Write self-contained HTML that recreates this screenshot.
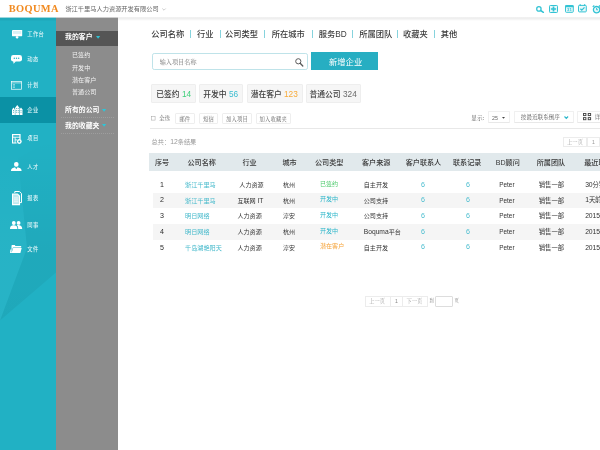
<!DOCTYPE html>
<html lang="zh-CN"><head><meta charset="utf-8"><title>BOQUMA</title>
<style>
html,body{margin:0;padding:0}
body{width:600px;height:450px;overflow:hidden;background:#fff;position:relative;font-family:"Liberation Sans","Noto Sans CJK SC",sans-serif;}
.t{position:absolute;white-space:nowrap;line-height:12px;height:12px}
.c{text-align:center}
.b{position:absolute;box-sizing:border-box}
svg{position:absolute;overflow:visible}
</style></head><body>
<div id="app" style="position:absolute;left:0;top:0;width:600px;height:450px;overflow:hidden;will-change:transform">

<div class="b" style="left:0;top:0;width:600px;height:17.5px;background:#fff"></div>
<div class="b" style="left:0;top:17px;width:600px;height:4px;background:linear-gradient(to bottom,rgba(0,0,0,0.045),rgba(0,0,0,0.07) 25%,rgba(0,0,0,0.05) 50%,rgba(0,0,0,0))"></div>
<div class="b" style="left:0;top:17px;width:56px;height:1px;background:#21b1c4;opacity:0.4"></div>
<div class="b" style="left:56px;top:17px;width:61.7px;height:1px;background:#8c8c8c;opacity:0.35"></div>
<div class="t" style="left:8.8px;top:3.10px;font-size:10.4px;color:#f18a20;font-family:'Liberation Serif',serif;font-weight:bold;letter-spacing:0.35px">BOQUMA</div>
<div class="t" style="left:65.4px;top:3.20px;font-size:6.22px;color:#666;">浙江千里马人力资源开发有限公司</div>
<svg style="left:161.5px;top:7.5px" width="4" height="3" viewBox="0 0 4 3"><path d="M0.3 0.5 L2 2.2 L3.7 0.5" fill="none" stroke="#999" stroke-width="0.5"/></svg>
<svg style="left:535.8px;top:6.2px" width="8.4" height="7" viewBox="0 0 8.4 7"><circle cx="2.9" cy="2.9" r="2.2" fill="none" stroke="#33c3d4" stroke-width="1.25"/><path d="M4.6 4.5 L7.4 6.3" stroke="#33c3d4" stroke-width="1.5" stroke-linecap="round"/></svg>
<svg style="left:549.3px;top:4.9px" width="9" height="8" viewBox="0 0 9 8"><rect x="0.5" y="0.5" width="8" height="7" rx="0.8" fill="#e9f8fa" stroke="#33c3d4" stroke-width="1"/><path d="M4.5 1.6 V6.4 M1.9 4 H7.1" stroke="#33c3d4" stroke-width="1.7"/></svg>
<svg style="left:565px;top:4.9px" width="8.8" height="7.8" viewBox="0 0 8.8 7.8"><rect x="0.5" y="0.5" width="7.8" height="6.8" rx="0.8" fill="#e9f8fa" stroke="#33c3d4" stroke-width="1"/><rect x="0.2" y="0.2" width="8.4" height="2" rx="0.6" fill="#33c3d4"/><text x="4.4" y="6.5" font-size="4.3" font-weight="bold" fill="#33c3d4" text-anchor="middle" font-family="Liberation Sans,sans-serif">31</text></svg>
<svg style="left:578px;top:4.4px" width="8.8" height="8.4" viewBox="0 0 8.8 8.4"><rect x="0.5" y="1.4" width="7.8" height="6.5" rx="0.8" fill="#e9f8fa" stroke="#33c3d4" stroke-width="1"/><path d="M2.2 0.2 V2 M6.6 0.2 V2" stroke="#33c3d4" stroke-width="1.2"/><path d="M2.4 4.7 L3.8 6.1 L6.5 3.4" fill="none" stroke="#33c3d4" stroke-width="1.3"/></svg>
<svg style="left:592.4px;top:4.6px" width="9" height="8.4" viewBox="0 0 9 8.4"><circle cx="4.6" cy="4.7" r="3.2" fill="#e9f8fa" stroke="#33c3d4" stroke-width="1.3"/><path d="M4.6 2.9 V4.8 H6" fill="none" stroke="#33c3d4" stroke-width="1"/><path d="M0.7 1.9 L2.3 0.5 M8.6 1.9 L7 0.5" stroke="#33c3d4" stroke-width="1.2"/></svg>
<div class="b" style="left:0;top:17.5px;width:56px;height:432.5px;background:#21b1c4;overflow:hidden">
<svg style="left:0;top:0" width="56" height="433" viewBox="0 0 56 433"><defs><linearGradient id="gd" x1="0" y1="0" x2="0" y2="1"><stop offset="0" stop-color="#000" stop-opacity="0"/><stop offset="0.6" stop-color="#000" stop-opacity="0.045"/><stop offset="1" stop-color="#000" stop-opacity="0.05"/></linearGradient><linearGradient id="gl" x1="0" y1="0" x2="0" y2="1"><stop offset="0" stop-color="#fff" stop-opacity="0"/><stop offset="0.5" stop-color="#fff" stop-opacity="0.025"/><stop offset="1" stop-color="#fff" stop-opacity="0.03"/></linearGradient></defs><polygon points="18,140 56,120 56,254.5 0,302.5 27,230" fill="url(#gd)"/><polygon points="0,130 18,140 27,230 0,302.5" fill="url(#gl)"/><rect x="0" y="0" width="56" height="2.5" fill="#000" opacity="0.05"/></svg>
<div class="b" style="left:0;top:79.3px;width:56px;height:26.6px;background:#0b91a5"></div>
</div>
<div class="t" style="left:27.3px;top:27.80px;font-size:5.3px;color:#dcf3f6;font-weight:500;letter-spacing:0.3px">工作台</div>
<div class="t" style="left:27.3px;top:53.20px;font-size:5.3px;color:#dcf3f6;font-weight:500;letter-spacing:0.3px">动态</div>
<div class="t" style="left:27.3px;top:79.00px;font-size:5.3px;color:#dcf3f6;font-weight:500;letter-spacing:0.3px">计划</div>
<div class="t" style="left:27.3px;top:104.30px;font-size:5.3px;color:#dcf3f6;font-weight:500;letter-spacing:0.3px">企业</div>
<div class="t" style="left:27.3px;top:132.00px;font-size:5.3px;color:#dcf3f6;font-weight:500;letter-spacing:0.3px">项目</div>
<div class="t" style="left:27.3px;top:160.50px;font-size:5.3px;color:#dcf3f6;font-weight:500;letter-spacing:0.3px">人才</div>
<div class="t" style="left:27.3px;top:192.00px;font-size:5.3px;color:#dcf3f6;font-weight:500;letter-spacing:0.3px">报表</div>
<div class="t" style="left:27.3px;top:218.70px;font-size:5.3px;color:#dcf3f6;font-weight:500;letter-spacing:0.3px">同事</div>
<div class="t" style="left:27.3px;top:243.00px;font-size:5.3px;color:#dcf3f6;font-weight:500;letter-spacing:0.3px">文件</div>
<svg style="left:11.8px;top:29.9px" width="10.2" height="8.8" viewBox="0 0 11 9" preserveAspectRatio="none"><rect x="0" y="0" width="11" height="6.4" rx="0.5" fill="#fff"/><path d="M4.3 6.4 H6.7 L7 8 L5.5 8.9 L4 8 Z" fill="#fff"/><rect x="1" y="1" width="9" height="3" fill="#d9f1f5"/></svg>
<svg style="left:11px;top:55px" width="11" height="9" viewBox="0 0 11 9"><rect x="0" y="0" width="11" height="6.6" rx="2.4" fill="#fff"/><path d="M2.2 6 L2.6 8.8 L5 6.2 Z" fill="#fff"/><circle cx="3.3" cy="3.3" r="0.7" fill="#21b1c4"/><circle cx="5.5" cy="3.3" r="0.7" fill="#21b1c4"/><circle cx="7.7" cy="3.3" r="0.7" fill="#21b1c4"/></svg>
<svg style="left:11px;top:80.6px" width="11" height="8.6" viewBox="0 0 11 8.6"><rect x="0.35" y="0.35" width="10.3" height="7.9" fill="none" stroke="#fff" stroke-width="0.7"/><path d="M0.3 1.9 H10.7" stroke="#fff" stroke-width="0.6"/><path d="M1.8 3.6 H4 M1.8 5 H4 M1.8 6.4 H4" stroke="#fff" stroke-width="0.5"/></svg>
<svg style="left:12px;top:105.3px" width="10.5" height="10" viewBox="0 0 10.5 10"><path d="M3 10 V3 L5.25 0 L7.5 3 V10 Z" fill="#fff"/><path d="M0 10 V4.4 L1.5 2.4 L3 4.4 V10 Z" fill="#fff"/><path d="M7.5 10 V4.4 L9 2.4 L10.5 4.4 V10 Z" fill="#fff"/><g fill="#0b91a5"><rect x="3.9" y="3.2" width="0.8" height="0.8"/><rect x="5.8" y="3.2" width="0.8" height="0.8"/><rect x="3.9" y="5" width="0.8" height="0.8"/><rect x="5.8" y="5" width="0.8" height="0.8"/><rect x="3.9" y="6.8" width="0.8" height="0.8"/><rect x="5.8" y="6.8" width="0.8" height="0.8"/><rect x="1.1" y="5" width="0.8" height="0.8"/><rect x="1.1" y="6.8" width="0.8" height="0.8"/><rect x="8.6" y="5" width="0.8" height="0.8"/><rect x="8.6" y="6.8" width="0.8" height="0.8"/><rect x="2.9" y="4.4" width="0.35" height="5.6"/><rect x="7.3" y="4.4" width="0.35" height="5.6"/></g></svg>
<svg style="left:12.2px;top:133.6px" width="9.8" height="9.9" viewBox="0 0 9.8 9.9"><path d="M8 5.2 V0.6 H0.6 V9 H4.6" fill="none" stroke="#fff" stroke-width="1.2"/><path d="M0.6 3.2 H8 M3.1 3.2 V9 M3.1 5.9 H5" stroke="#fff" stroke-width="0.9"/><circle cx="7.3" cy="7.5" r="2.4" fill="#fff"/><circle cx="7.3" cy="7.5" r="1" fill="#21b1c4"/></svg>
<svg style="left:11.4px;top:162px" width="10.6" height="9" viewBox="0 0 10.6 10.4" preserveAspectRatio="none"><rect x="3.1" y="0" width="4.4" height="5.6" rx="2" fill="#fff"/><path d="M0 10.4 C0 7.4 2.2 7 4 6.2 L5.3 8.4 L6.6 6.2 C8.4 7 10.6 7.4 10.6 10.4 Z" fill="#fff"/></svg>
<svg style="left:11.7px;top:190.8px" width="10" height="14.2" viewBox="0 0 10 14.2"><path d="M2.8 2 V0.5 H7.4 L9.5 2.6 V11.6 H8" fill="none" stroke="#fff" stroke-width="1"/><path d="M0.55 2.95 H5.4 L7.5 5 V13.65 H0.55 Z" fill="#bfe8ee" stroke="#fff" stroke-width="1.1"/><path d="M2 7 H6 M2 8.9 H6 M2 10.8 H6" stroke="#fff" stroke-width="0.7"/></svg>
<svg style="left:10.3px;top:220.8px" width="12.2" height="8" viewBox="0 0 12.2 8"><circle cx="3.8" cy="2" r="1.9" fill="#fff"/><path d="M0 8 C0 5 1.6 4.3 3.8 4.3 C6 4.3 7.4 5 7.4 8 Z" fill="#fff"/><circle cx="8.6" cy="1.9" r="1.9" fill="#fff"/><path d="M6.9 4.2 C8 3.9 12.2 3.8 12.2 8 H8.2 C8.2 6 7.9 5 6.9 4.2 Z" fill="#fff"/></svg>
<svg style="left:10.3px;top:245.3px" width="11.7" height="8" viewBox="0 0 11.7 8"><path d="M1.5 1.2 L1.8 0 H4.8 L5.4 1 H11.2 V2.6 H2.9 L1.5 7 Z" fill="#fff"/><path d="M3.2 3.1 H11.7 L10.4 8 H0 L0.4 4.6 L1.3 4.6 L1.6 7.8 Z" fill="#fff"/></svg>
<div class="b" style="left:56px;top:17.7px;width:61.7px;height:432.3px;background:#8c8c8c"></div>
<div class="b" style="left:56px;top:30.8px;width:61.7px;height:14.9px;background:#555"></div>
<div class="t" style="left:65.1px;top:31.20px;font-size:6.85px;color:#fff;font-weight:bold">我的客户</div>
<svg style="left:96.1px;top:36px" width="4.2" height="2.8" viewBox="0 0 3.6 2.2"><path d="M0 0 H3.6 L1.8 2.2 Z" fill="#2fc1d2"/></svg>
<div class="t" style="left:72px;top:49.00px;font-size:6.1px;color:#f2f2f2;">已签约</div>
<div class="t" style="left:72px;top:61.60px;font-size:6.1px;color:#f2f2f2;">开发中</div>
<div class="t" style="left:72px;top:74.00px;font-size:6.1px;color:#f2f2f2;">潜在客户</div>
<div class="t" style="left:72px;top:86.20px;font-size:6.1px;color:#f2f2f2;">普通公司</div>
<div class="t" style="left:65.1px;top:104.10px;font-size:6.85px;color:#fff;font-weight:bold">所有的公司</div>
<svg style="left:101.7px;top:108.6px" width="4.2" height="2.8" viewBox="0 0 3.2 2"><path d="M0 0 H3.2 L1.6 2 Z" fill="#2cc6d9"/></svg>
<div class="b" style="left:61px;top:117px;width:53px;height:0;border-top:0.7px dotted rgba(255,255,255,0.16)"></div>
<div class="t" style="left:65.1px;top:119.90px;font-size:6.85px;color:#fff;font-weight:bold">我的收藏夹</div>
<svg style="left:101.7px;top:124.3px" width="4.2" height="2.8" viewBox="0 0 3.2 2"><path d="M0 0 H3.2 L1.6 2 Z" fill="#2cc6d9"/></svg>
<div class="b" style="left:61px;top:133px;width:53px;height:0;border-top:0.7px dotted rgba(255,255,255,0.16)"></div>
<div class="t" style="left:151.25px;top:29.30px;font-size:8.25px;color:#3c3c3c;font-weight:500">公司名称</div>
<div class="t" style="left:197px;top:29.30px;font-size:8.25px;color:#3c3c3c;font-weight:500">行业</div>
<div class="t" style="left:225px;top:29.30px;font-size:8.25px;color:#3c3c3c;font-weight:500">公司类型</div>
<div class="t" style="left:271.75px;top:29.30px;font-size:8.25px;color:#3c3c3c;font-weight:500">所在城市</div>
<div class="t" style="left:318.75px;top:29.30px;font-size:8.25px;color:#3c3c3c;font-weight:500">服务BD</div>
<div class="t" style="left:359.25px;top:29.30px;font-size:8.25px;color:#3c3c3c;font-weight:500">所属团队</div>
<div class="t" style="left:403px;top:29.30px;font-size:8.25px;color:#3c3c3c;font-weight:500">收藏夹</div>
<div class="t" style="left:440.75px;top:29.30px;font-size:8.25px;color:#3c3c3c;font-weight:500">其他</div>
<div class="b" style="left:190.4px;top:30.2px;width:1px;height:7.4px;background:#86d3dd"></div>
<div class="b" style="left:219.65px;top:30.2px;width:1px;height:7.4px;background:#86d3dd"></div>
<div class="b" style="left:264.04999999999995px;top:30.2px;width:1px;height:7.4px;background:#86d3dd"></div>
<div class="b" style="left:312.15px;top:30.2px;width:1px;height:7.4px;background:#86d3dd"></div>
<div class="b" style="left:352.15px;top:30.2px;width:1px;height:7.4px;background:#86d3dd"></div>
<div class="b" style="left:396.75px;top:30.2px;width:1px;height:7.4px;background:#86d3dd"></div>
<div class="b" style="left:434.15px;top:30.2px;width:1px;height:7.4px;background:#86d3dd"></div>
<div class="b" style="left:152px;top:53px;width:155.5px;height:16.8px;border:0.9px solid #bfe3e9;border-radius:2.2px;background:#fff"></div>
<div class="t" style="left:159.7px;top:55.50px;font-size:6.15px;color:#777;font-family:'Liberation Serif','Noto Serif CJK SC',serif">输入项目名称</div>
<svg style="left:295.4px;top:57.5px" width="8.4" height="8.6" viewBox="0 0 8.4 8.6"><circle cx="3.3" cy="3.3" r="2.6" fill="none" stroke="#5a5a5a" stroke-width="1"/><path d="M5.2 5.3 L7.8 8" stroke="#5a5a5a" stroke-width="1.3" stroke-linecap="round"/></svg>
<div class="b" style="left:311.4px;top:52.1px;width:67px;height:17.6px;background:#27aec2"></div>
<div class="t c" style="left:295.6px;width:100px;top:56.10px;font-size:8.3px;color:#fff;">新增企业</div>
<div class="b" style="left:151px;top:84px;width:44.5px;height:18.5px;background:#f6f6f6;border:0.6px solid #eeeeee;border-radius:1px"></div>
<div class="t" style="left:156.35px;top:88.50px;font-size:7.75px;color:#3c3c3c;font-weight:500">已签约 <span style="color:#3fcf7a;font-size:9.2px;font-weight:400;display:inline-block;transform:scaleX(0.9);transform-origin:0 50%;line-height:12px;vertical-align:top;position:relative;top:-0.2px">14</span></div>
<div class="b" style="left:199px;top:84px;width:44px;height:18.5px;background:#f6f6f6;border:0.6px solid #eeeeee;border-radius:1px"></div>
<div class="t" style="left:203.35px;top:88.50px;font-size:7.75px;color:#3c3c3c;font-weight:500">开发中 <span style="color:#3bbdd0;font-size:9.2px;font-weight:400;display:inline-block;transform:scaleX(0.9);transform-origin:0 50%;line-height:12px;vertical-align:top;position:relative;top:-0.2px">56</span></div>
<div class="b" style="left:247px;top:84px;width:55.5px;height:18.5px;background:#f6f6f6;border:0.6px solid #eeeeee;border-radius:1px"></div>
<div class="t" style="left:250.85px;top:88.50px;font-size:7.75px;color:#3c3c3c;font-weight:500">潜在客户 <span style="color:#f7ab3a;font-size:9.2px;font-weight:400;display:inline-block;transform:scaleX(0.9);transform-origin:0 50%;line-height:12px;vertical-align:top;position:relative;top:-0.2px">123</span></div>
<div class="b" style="left:305.75px;top:84px;width:55.5px;height:18.5px;background:#f6f6f6;border:0.6px solid #eeeeee;border-radius:1px"></div>
<div class="t" style="left:309.6px;top:88.50px;font-size:7.75px;color:#3c3c3c;font-weight:500">普通公司 <span style="color:#6a6a6a;font-size:9.2px;font-weight:400;display:inline-block;transform:scaleX(0.9);transform-origin:0 50%;line-height:12px;vertical-align:top;position:relative;top:-0.2px">324</span></div>
<svg style="left:151.3px;top:116.3px" width="4.4" height="4.4" viewBox="0 0 4.4 4.4"><rect x="0.3" y="0.3" width="3.8" height="3.8" fill="#fff" stroke="#a0a0a0" stroke-width="0.5"/></svg>
<div class="t" style="left:159px;top:112.40px;font-size:5.6px;color:#666;font-family:'Liberation Serif','Noto Serif CJK SC',serif">全选</div>
<div class="b" style="left:175px;top:113px;width:19.5px;height:11px;border:0.6px solid #eeeeee;border-radius:1px;background:#fff"></div>
<div class="t c" style="left:134.85px;width:100px;top:112.50px;font-size:5.3px;color:#666;font-family:'Liberation Serif','Noto Serif CJK SC',serif;letter-spacing:0.15px">邮件</div>
<div class="b" style="left:199px;top:113px;width:19px;height:11px;border:0.6px solid #eeeeee;border-radius:1px;background:#fff"></div>
<div class="t c" style="left:158.6px;width:100px;top:112.50px;font-size:5.3px;color:#666;font-family:'Liberation Serif','Noto Serif CJK SC',serif;letter-spacing:0.15px">短信</div>
<div class="b" style="left:222px;top:113px;width:29.75px;height:11px;border:0.6px solid #eeeeee;border-radius:1px;background:#fff"></div>
<div class="t c" style="left:186.975px;width:100px;top:112.50px;font-size:5.3px;color:#666;font-family:'Liberation Serif','Noto Serif CJK SC',serif;letter-spacing:0.15px">加入项目</div>
<div class="b" style="left:255.75px;top:113px;width:34.75px;height:11px;border:0.6px solid #eeeeee;border-radius:1px;background:#fff"></div>
<div class="t c" style="left:223.22500000000002px;width:100px;top:112.50px;font-size:5.3px;color:#666;font-family:'Liberation Serif','Noto Serif CJK SC',serif;letter-spacing:0.15px">加入收藏夹</div>
<div class="t" style="left:471.2px;top:111.50px;font-size:5.6px;color:#666;font-family:'Liberation Serif','Noto Serif CJK SC',serif;letter-spacing:0.2px">显示:</div>
<div class="b" style="left:487.5px;top:111px;width:22.5px;height:12.2px;border:0.6px solid #f0f0f0;border-bottom-color:#e8e8e8;border-radius:1px;background:#fff"></div>
<div class="t" style="left:492px;top:111.80px;font-size:5.3px;color:#666;">25</div>
<svg style="left:501.6px;top:116.8px" width="3" height="1.8" viewBox="0 0 3 1.8"><path d="M0 0 H3 L1.5 1.8 Z" fill="#444"/></svg>
<div class="b" style="left:514.25px;top:111px;width:59.4px;height:12.2px;border:0.6px solid #f0f0f0;border-bottom-color:#e8e8e8;border-radius:1px;background:#fff"></div>
<div class="t" style="left:520.8px;top:111.40px;font-size:5.6px;color:#5a5a5a;font-family:'Liberation Serif','Noto Serif CJK SC',serif">按最近联系倒序</div>
<svg style="left:563.8px;top:116px" width="4.6" height="3" viewBox="0 0 4.6 3"><path d="M0.5 0.5 L2.3 2.4 L4.1 0.5" fill="none" stroke="#2fb8cc" stroke-width="1.15"/></svg>
<div class="b" style="left:577.2px;top:111px;width:30px;height:12.2px;border:0.6px solid #f0f0f0;border-bottom-color:#e8e8e8;border-radius:1px;background:#fff"></div>
<svg style="left:583.2px;top:112.9px" width="8.1" height="7.2" viewBox="0 0 8.1 7.2"><g fill="none" stroke="#484848" stroke-width="0.95"><rect x="0.48" y="0.48" width="2.4" height="2.1"/><rect x="5.22" y="0.48" width="2.4" height="2.1"/><rect x="0.48" y="4.62" width="2.4" height="2.1"/><rect x="5.22" y="4.62" width="2.4" height="2.1"/></g></svg>
<div class="t" style="left:594.8px;top:111.40px;font-size:5.6px;color:#5a5a5a;font-family:'Liberation Serif','Noto Serif CJK SC',serif">详细</div>
<div class="b" style="left:150px;top:128.3px;width:450px;height:0.6px;background:#e8e8e8"></div>
<div class="t" style="left:151.6px;top:136.20px;font-size:6.2px;color:#999;">总共：<span style="font-size:6.8px">12</span>条结果</div>
<div class="b" style="left:563px;top:136.75px;width:24.2px;height:10.4px;border:0.6px solid #ececec;background:#fff"></div>
<div class="t c" style="left:525px;width:100px;top:136.00px;font-size:5.3px;color:#a5a5a5;font-family:'Liberation Serif','Noto Serif CJK SC',serif">上一页</div>
<div class="b" style="left:586.6px;top:136.75px;width:13px;height:10.4px;border:0.6px solid #ececec;background:#fff"></div>
<div class="t c" style="left:543.4px;width:100px;top:136.20px;font-size:5.2px;color:#999;">1</div>
<div class="b" style="left:149.25px;top:153.25px;width:451px;height:17.5px;background:#e1e9ec"></div>
<div class="t" style="left:155px;top:156.90px;font-size:7.1px;color:#383838;font-weight:500">序号</div>
<div class="t" style="left:187.5px;top:156.90px;font-size:7.1px;color:#383838;font-weight:500">公司名称</div>
<div class="t" style="left:242.5px;top:156.90px;font-size:7.1px;color:#383838;font-weight:500">行业</div>
<div class="t" style="left:282.5px;top:156.90px;font-size:7.1px;color:#383838;font-weight:500">城市</div>
<div class="t" style="left:315px;top:156.90px;font-size:7.1px;color:#383838;font-weight:500">公司类型</div>
<div class="t" style="left:362px;top:156.90px;font-size:7.1px;color:#383838;font-weight:500">客户来源</div>
<div class="t" style="left:405.75px;top:156.90px;font-size:7.1px;color:#383838;font-weight:500">客户联系人</div>
<div class="t" style="left:453px;top:156.90px;font-size:7.1px;color:#383838;font-weight:500">联系记录</div>
<div class="t" style="left:495.75px;top:156.90px;font-size:7.1px;color:#383838;font-weight:500">BD顾问</div>
<div class="t" style="left:536.75px;top:156.90px;font-size:7.1px;color:#383838;font-weight:500">所属团队</div>
<div class="t" style="left:584.25px;top:156.90px;font-size:7.1px;color:#383838;font-weight:500">最近联系</div>
<div class="t c" style="left:112px;width:100px;top:178.70px;font-size:7.1px;color:#2a2a2a;">1</div>
<div class="t" style="left:185px;top:178.90px;font-size:6.15px;color:#45b9cb;">浙江千里马</div>
<div class="t" style="left:239.3px;top:178.90px;font-size:6.1px;color:#333;">人力资源</div>
<div class="t" style="left:283px;top:178.90px;font-size:6.0px;color:#333;">杭州</div>
<div class="t" style="left:320px;top:177.60px;font-size:6.05px;color:#4cc96b;">已签约</div>
<div class="t" style="left:363.75px;top:178.90px;font-size:6.1px;color:#333;">自主开发</div>
<div class="t c" style="left:372.7px;width:100px;top:178.50px;font-size:7.9px;color:#4bbdcf;transform:scaleX(0.9)">6</div>
<div class="t c" style="left:418.3px;width:100px;top:178.50px;font-size:7.9px;color:#4bbdcf;transform:scaleX(0.9)">6</div>
<div class="t" style="left:499.25px;top:178.90px;font-size:6.4px;color:#333;">Peter</div>
<div class="t" style="left:538.75px;top:178.90px;font-size:6.35px;color:#333;">销售一部</div>
<div class="t" style="left:585.2px;top:178.70px;font-size:6.8px;color:#333;letter-spacing:-0.1px">30<span style="font-size:6.3px">分钟前</span></div>
<div class="b" style="left:153px;top:192.50px;width:447px;height:15.7px;background:#f5f5f5"></div>
<div class="t c" style="left:112px;width:100px;top:194.40px;font-size:7.1px;color:#2a2a2a;">2</div>
<div class="t" style="left:185px;top:194.60px;font-size:6.15px;color:#45b9cb;">浙江千里马</div>
<div class="t" style="left:237.4px;top:194.60px;font-size:6.1px;color:#333;">互联网 <span style="font-size:6.7px">IT</span></div>
<div class="t" style="left:283px;top:194.60px;font-size:6.0px;color:#333;">杭州</div>
<div class="t" style="left:320px;top:193.30px;font-size:6.05px;color:#29b5c9;">开发中</div>
<div class="t" style="left:363.75px;top:194.60px;font-size:6.1px;color:#333;">公司支持</div>
<div class="t c" style="left:372.7px;width:100px;top:194.20px;font-size:7.9px;color:#4bbdcf;transform:scaleX(0.9)">6</div>
<div class="t c" style="left:418.3px;width:100px;top:194.20px;font-size:7.9px;color:#4bbdcf;transform:scaleX(0.9)">6</div>
<div class="t" style="left:499.25px;top:194.60px;font-size:6.4px;color:#333;">Peter</div>
<div class="t" style="left:538.75px;top:194.60px;font-size:6.35px;color:#333;">销售一部</div>
<div class="t" style="left:585.2px;top:194.40px;font-size:6.8px;color:#333;letter-spacing:-0.1px">1<span style="font-size:6.3px">天前</span></div>
<div class="t c" style="left:112px;width:100px;top:210.10px;font-size:7.1px;color:#2a2a2a;">3</div>
<div class="t" style="left:185px;top:210.30px;font-size:6.15px;color:#45b9cb;">明日网络</div>
<div class="t" style="left:237.4px;top:210.30px;font-size:6.1px;color:#333;">人力资源</div>
<div class="t" style="left:283px;top:210.30px;font-size:6.0px;color:#333;">淳安</div>
<div class="t" style="left:320px;top:209.00px;font-size:6.05px;color:#29b5c9;">开发中</div>
<div class="t" style="left:363.75px;top:210.30px;font-size:6.1px;color:#333;">公司支持</div>
<div class="t c" style="left:372.7px;width:100px;top:209.90px;font-size:7.9px;color:#4bbdcf;transform:scaleX(0.9)">6</div>
<div class="t c" style="left:418.3px;width:100px;top:209.90px;font-size:7.9px;color:#4bbdcf;transform:scaleX(0.9)">6</div>
<div class="t" style="left:499.25px;top:210.30px;font-size:6.4px;color:#333;">Peter</div>
<div class="t" style="left:538.75px;top:210.30px;font-size:6.35px;color:#333;">销售一部</div>
<div class="t" style="left:585.2px;top:210.10px;font-size:6.8px;color:#333;letter-spacing:-0.1px">2015-</div>
<div class="b" style="left:153px;top:223.90px;width:447px;height:15.7px;background:#f5f5f5"></div>
<div class="t c" style="left:112px;width:100px;top:225.80px;font-size:7.1px;color:#2a2a2a;">4</div>
<div class="t" style="left:185px;top:226.00px;font-size:6.15px;color:#45b9cb;">明日网络</div>
<div class="t" style="left:237.4px;top:226.00px;font-size:6.1px;color:#333;">人力资源</div>
<div class="t" style="left:283px;top:226.00px;font-size:6.0px;color:#333;">杭州</div>
<div class="t" style="left:320px;top:224.70px;font-size:6.05px;color:#29b5c9;">开发中</div>
<div class="t" style="left:363.75px;top:226.00px;font-size:6.1px;color:#333;"><span style="font-size:6.7px">Boquma</span>平台</div>
<div class="t c" style="left:372.7px;width:100px;top:225.60px;font-size:7.9px;color:#4bbdcf;transform:scaleX(0.9)">6</div>
<div class="t c" style="left:418.3px;width:100px;top:225.60px;font-size:7.9px;color:#4bbdcf;transform:scaleX(0.9)">6</div>
<div class="t" style="left:499.25px;top:226.00px;font-size:6.4px;color:#333;">Peter</div>
<div class="t" style="left:538.75px;top:226.00px;font-size:6.35px;color:#333;">销售一部</div>
<div class="t" style="left:585.2px;top:225.80px;font-size:6.8px;color:#333;letter-spacing:-0.1px">2015-</div>
<div class="t c" style="left:112px;width:100px;top:241.50px;font-size:7.1px;color:#2a2a2a;">5</div>
<div class="t" style="left:185px;top:241.70px;font-size:6.15px;color:#45b9cb;">千岛湖艳阳天</div>
<div class="t" style="left:237.4px;top:241.70px;font-size:6.1px;color:#333;">人力资源</div>
<div class="t" style="left:283px;top:241.70px;font-size:6.0px;color:#333;">淳安</div>
<div class="t" style="left:320px;top:240.40px;font-size:6.05px;color:#f5a033;">潜在客户</div>
<div class="t" style="left:363.75px;top:241.70px;font-size:6.1px;color:#333;">自主开发</div>
<div class="t c" style="left:372.7px;width:100px;top:241.30px;font-size:7.9px;color:#4bbdcf;transform:scaleX(0.9)">6</div>
<div class="t c" style="left:418.3px;width:100px;top:241.30px;font-size:7.9px;color:#4bbdcf;transform:scaleX(0.9)">6</div>
<div class="t" style="left:499.25px;top:241.70px;font-size:6.4px;color:#333;">Peter</div>
<div class="t" style="left:538.75px;top:241.70px;font-size:6.35px;color:#333;">销售一部</div>
<div class="t" style="left:585.2px;top:241.50px;font-size:6.8px;color:#333;letter-spacing:-0.1px">2015-</div>
<div class="b" style="left:364.5px;top:295.75px;width:26px;height:11.3px;border:0.6px solid #ececec;background:#fff"></div>
<div class="t c" style="left:327.2px;width:100px;top:295.20px;font-size:5.3px;color:#a5a5a5;font-family:'Liberation Serif','Noto Serif CJK SC',serif">上一页</div>
<div class="b" style="left:389.9px;top:295.75px;width:13px;height:11.3px;border:0.6px solid #ececec;background:#fff"></div>
<div class="t c" style="left:346.4px;width:100px;top:295.40px;font-size:5.2px;color:#888;">1</div>
<div class="b" style="left:402.3px;top:295.75px;width:25.8px;height:11.3px;border:0.6px solid #ececec;background:#fff"></div>
<div class="t c" style="left:364.4px;width:100px;top:295.20px;font-size:5.3px;color:#a5a5a5;font-family:'Liberation Serif','Noto Serif CJK SC',serif">下一页</div>
<div class="t" style="left:429.6px;top:295.00px;font-size:4.4px;color:#888;font-family:'Liberation Serif','Noto Serif CJK SC',serif">到</div>
<div class="b" style="left:435px;top:295.5px;width:18px;height:11.8px;border:0.6px solid #ddd;border-radius:1px;background:#fff"></div>
<div class="t" style="left:454.6px;top:295.00px;font-size:4.4px;color:#888;font-family:'Liberation Serif','Noto Serif CJK SC',serif">页</div>
</div></body></html>
